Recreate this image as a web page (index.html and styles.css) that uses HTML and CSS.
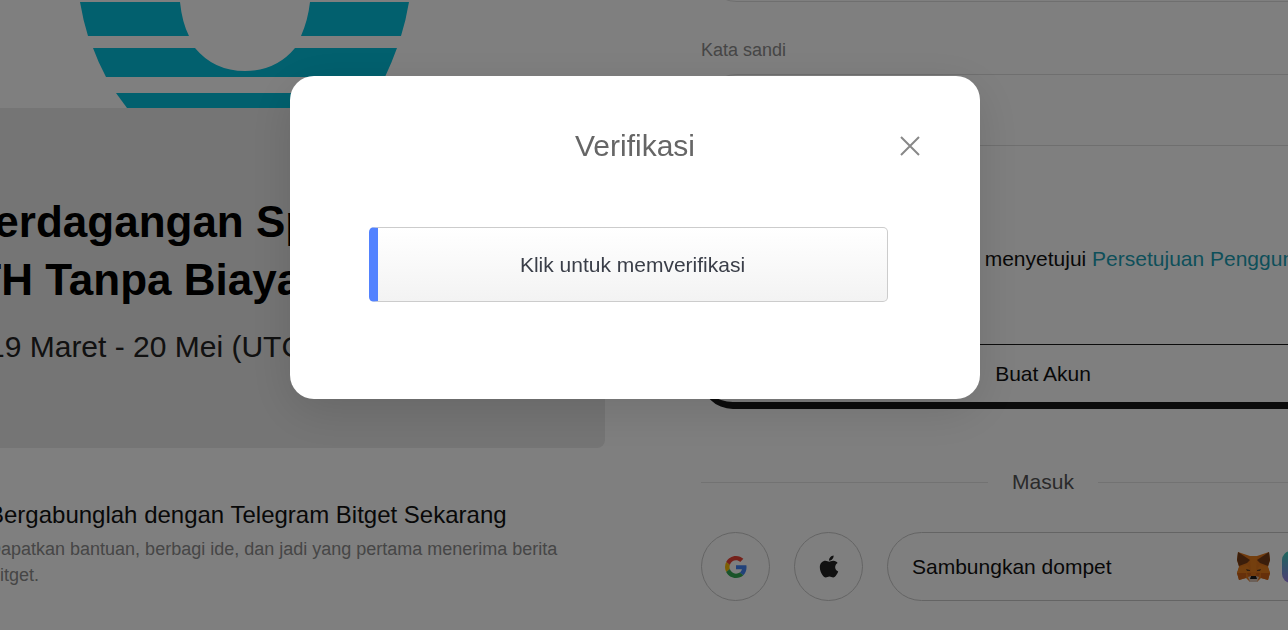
FILE: index.html
```html
<!DOCTYPE html>
<html lang="id">
<head>
<meta charset="utf-8">
<meta name="viewport" content="width=device-width, initial-scale=1">
<title>Verifikasi</title>
<link rel="stylesheet" href="styles.css">
</head>
<body>
<main class="page">
  <section class="promo">
    <div class="banner">
      <div class="banner-top">
        <svg class="banner-art" viewBox="0 0 330 108" aria-hidden="true">
          <path d="M0 2H100Q102 22 109 36H8Q3 20 0 2ZM230 2H329Q326 20 321 36H221Q228 20 230 2Z"/>
          <path d="M13 48H115Q134 71 165 71T215 48H317Q312 62 305 77H26Q18 62 13 48Z"/>
          <path d="M36 93H294Q289 101 283 108H47Z"/>
        </svg>
      </div>
      <div class="banner-text">
        <h2><span class="line">Perdagangan Spot</span><span class="line line-wide">ETH Tanpa Biaya</span></h2>
        <p>19 Maret - 20 Mei (UTC)</p>
      </div>
    </div>
    <h3>Bergabunglah dengan Telegram Bitget Sekarang</h3>
    <p class="promo-note">Dapatkan bantuan, berbagi ide, dan jadi yang pertama menerima berita Bitget.</p>
  </section>

  <form class="signup">
    <input class="field" type="text" aria-label="Email">
    <label class="field-label" for="password">Kata sandi</label>
    <input class="field" id="password" type="password">
    <p class="terms">Dengan membuat akun, Anda menyetujui <a href="#">Persetujuan Pengguna</a></p>
    <button class="create" type="button">Buat Akun</button>
    <div class="divider"><span>Masuk</span></div>
    <div class="providers">
      <button class="round" type="button" aria-label="Google">
        <svg width="22" height="22" viewBox="0 0 48 48" aria-hidden="true">
          <path fill="#ea4335" d="M24 9.5c3.54 0 6.71 1.22 9.21 3.6l6.85-6.85C35.9 2.38 30.47 0 24 0 14.62 0 6.51 5.38 2.56 13.22l7.98 6.19C12.43 13.72 17.74 9.5 24 9.5z"/>
          <path fill="#4285f4" d="M46.98 24.55c0-1.57-.15-3.09-.38-4.55H24v9.02h12.94c-.58 2.96-2.26 5.48-4.78 7.18l7.73 6c4.51-4.18 7.09-10.36 7.09-17.65z"/>
          <path fill="#fbbc05" d="M10.53 28.59A14.5 14.5 0 0 1 9.77 24c0-1.6.27-3.14.76-4.59l-7.98-6.19A23.9 23.9 0 0 0 0 24c0 3.88.92 7.54 2.56 10.78z"/>
          <path fill="#34a853" d="M24 48c6.48 0 11.93-2.13 15.89-5.81l-7.73-6c-2.15 1.45-4.92 2.3-8.16 2.3-6.26 0-11.57-4.22-13.47-9.91l-7.98 6.19C6.51 42.62 14.62 48 24 48z"/>
        </svg>
      </button>
      <button class="round" type="button" aria-label="Apple">
        <svg width="20" height="25" viewBox="0 0 384 512" aria-hidden="true">
          <path fill="#222" d="M318.7 268.7c-.2-36.7 16.4-64.4 50-84.8-18.8-26.9-47.2-41.7-84.7-44.6-35.5-2.8-74.3 20.7-88.5 20.7-15 0-49.4-19.7-76.4-19.7C63.3 141.2 4 184.8 4 273.5q0 39.3 14.4 81.2c12.8 36.7 59 126.7 107.2 125.2 25.2-.6 43-17.9 75.8-17.9 31.8 0 48.3 17.9 76.4 17.9 48.6-.7 90.4-82.5 102.6-119.3-65.2-30.7-61.7-90-61.7-91.9zm-56.6-164.2c27.3-32.4 24.8-61.9 24-72.5-24.1 1.4-52 16.4-67.9 34.9-17.5 19.8-27.8 44.3-25.6 71.9 26.1 2 49.9-11.4 69.5-34.3z"/>
        </svg>
      </button>
      <button class="wallet" type="button">
        <span>Sambungkan dompet</span>
        <span class="wallet-icons">
          <svg width="33" height="31" viewBox="0 0 33 31" aria-hidden="true">
            <path fill="#e2761b" d="M1 1L13 5H20L32 1L33 9L31 16L33 22L31 29L24 27L20 31H13L9 27L2 29L0 22L2 16L0 9Z"/>
            <path fill="#763d16" d="M1 1L13 9L10 12L2 15L0 9ZM32 1L20 9L23 12L31 15L33 9Z"/>
            <path fill="#e97f1c" d="M13 5H20L19 21H14ZM2 16L10 14L13 19L10 22H0ZM31 16L23 14L20 19L23 22H33Z"/>
            <path fill="#cd6116" d="M0 22H9V27L2 29ZM33 22H24V27L31 29ZM10 22L13 29L14 22ZM23 22L20 29L19 22Z"/>
            <path fill="#d7c1b3" d="M11 26L14 25H19L22 26L20 31H13Z"/>
            <path fill="#5a3a20" d="M9 18L13 19V20L10 20ZM24 18L20 19V20L23 20Z"/>
            <path fill="#161616" d="M14 25H19L20 28H13Z"/>
          </svg>
          <span class="wallet-tile"></span>
        </span>
      </button>
    </div>
  </form>
</main>

<div class="overlay">
  <div class="modal" role="dialog" aria-modal="true" aria-labelledby="modal-title">
    <header class="modal-head">
      <h1 id="modal-title">Verifikasi</h1>
      <button class="close" type="button" aria-label="Tutup">
        <svg width="20" height="20" viewBox="0 0 20 20" aria-hidden="true"><path d="M1 1L19 19M19 1L1 19"/></svg>
      </button>
    </header>
    <button class="verify" type="button">Klik untuk memverifikasi</button>
  </div>
</div>
</body>
</html>
```
FILE: styles.css
```css
* { box-sizing: border-box; }
html { overflow: hidden; }
body {
  margin: 0;
  height: 100vh;
  overflow: hidden;
  background: #fff;
  color: #111;
  font-family: "Liberation Sans", Arial, sans-serif;
}
h1, h2, h3, p { margin: 0; font-weight: 400; }
button { font: inherit; color: inherit; cursor: pointer; }

.page {
  display: grid;
  grid-template-columns: 617fr 684fr;
  gap: 96px;
  width: calc(100% + 109px);
  margin-left: -12px;
}

.banner {
  height: 448px;
  overflow: hidden;
  background: #eaeaea;
  border-radius: 0 0 8px 8px;
}
.banner-top { height: 108px; padding-left: 92px; background: #fff; }
.banner-art { display: block; width: 330px; height: 108px; fill: #04c0dc; }
.banner-text { padding-top: 85px; white-space: nowrap; }
.banner-text h2 {
  font-size: 44px;
  line-height: 58px;
  font-weight: 700;
  color: #000;
}
.line { display: block; margin-left: -23px; }
.line-wide { margin-left: -43px; }
.banner-text p { padding-top: 20px; font-size: 30px; line-height: 36px; color: #222; }
.promo h3 { margin-top: 51px; font-size: 24px; line-height: 32px; white-space: nowrap; }
.promo-note { margin-top: 5px; max-width: 590px; font-size: 18px; line-height: 26px; color: #8c8c8c; }

.signup { display: flex; flex-direction: column; }
.field {
  height: 72px;
  padding: 0 24px;
  border: 1px solid #dedede;
  border-radius: 36px;
  background: #fff;
  font: inherit;
}
.field:first-child { margin-top: -70px; }
.field-label { margin: 36px 0 12px; font-size: 18px; line-height: 24px; color: #8c8c8c; }
.terms { margin-top: 98px; font-size: 21px; line-height: 30px; white-space: nowrap; }
.terms a { color: #1c9fb5; text-decoration: none; }
.create {
  height: 65px;
  margin-top: 70px;
  border: solid #181818;
  border-width: 1px 1px 7px;
  border-radius: 32px;
  background: #fff;
  font-size: 21px;
}
.divider { display: flex; align-items: center; gap: 24px; margin-top: 59px; font-size: 21px; line-height: 28px; color: #555; }
.divider::before, .divider::after { content: ""; flex: 1; height: 1px; background: #e4e4e4; }
.providers { display: flex; gap: 24px; margin-top: 36px; }
.round, .wallet {
  display: flex;
  align-items: center;
  height: 69px;
  padding: 0;
  border: 1px solid #c8c8c8;
  border-radius: 35px;
  background: #fff;
}
.round { justify-content: center; width: 69px; }
.wallet { flex: 1; justify-content: space-between; padding: 0 70px 0 24px; font-size: 21px; }
.wallet-icons { display: flex; gap: 12px; }
.wallet-tile { width: 32px; height: 32px; border-radius: 9px; background: linear-gradient(#3cd0b8, #6fa0d8 55%, #a080e8); }

.overlay {
  position: fixed;
  inset: 0;
  padding: 76px 18px 0 0;
  background: rgba(0, 0, 0, .5);
}
.modal {
  width: 690px;
  max-width: 100%;
  margin: 0 auto;
  padding: 48px 0 97px;
  border-radius: 24px;
  background: #fff;
  box-shadow: 0 12px 48px rgba(0, 0, 0, .12);
}
.modal-head { display: grid; grid-template-columns: 1fr auto 1fr; align-items: center; padding: 0 60px; }
.modal-head h1 { grid-column: 2; font-size: 30px; line-height: 44px; color: #666; }
.close { display: flex; justify-self: end; padding: 0; border: 0; background: none; }
.close path { stroke: #888; stroke-width: 2; fill: none; }
.verify {
  display: block;
  width: calc(100% - 171px);
  height: 75px;
  margin: 59px 92px 0 79px;
  padding: 0;
  border: 1px solid #ccc;
  border-left: 9px solid #5282ff;
  border-radius: 5px;
  background: linear-gradient(#fff, #f3f3f3);
  font-size: 21px;
  color: #3a3e48;
}
```
